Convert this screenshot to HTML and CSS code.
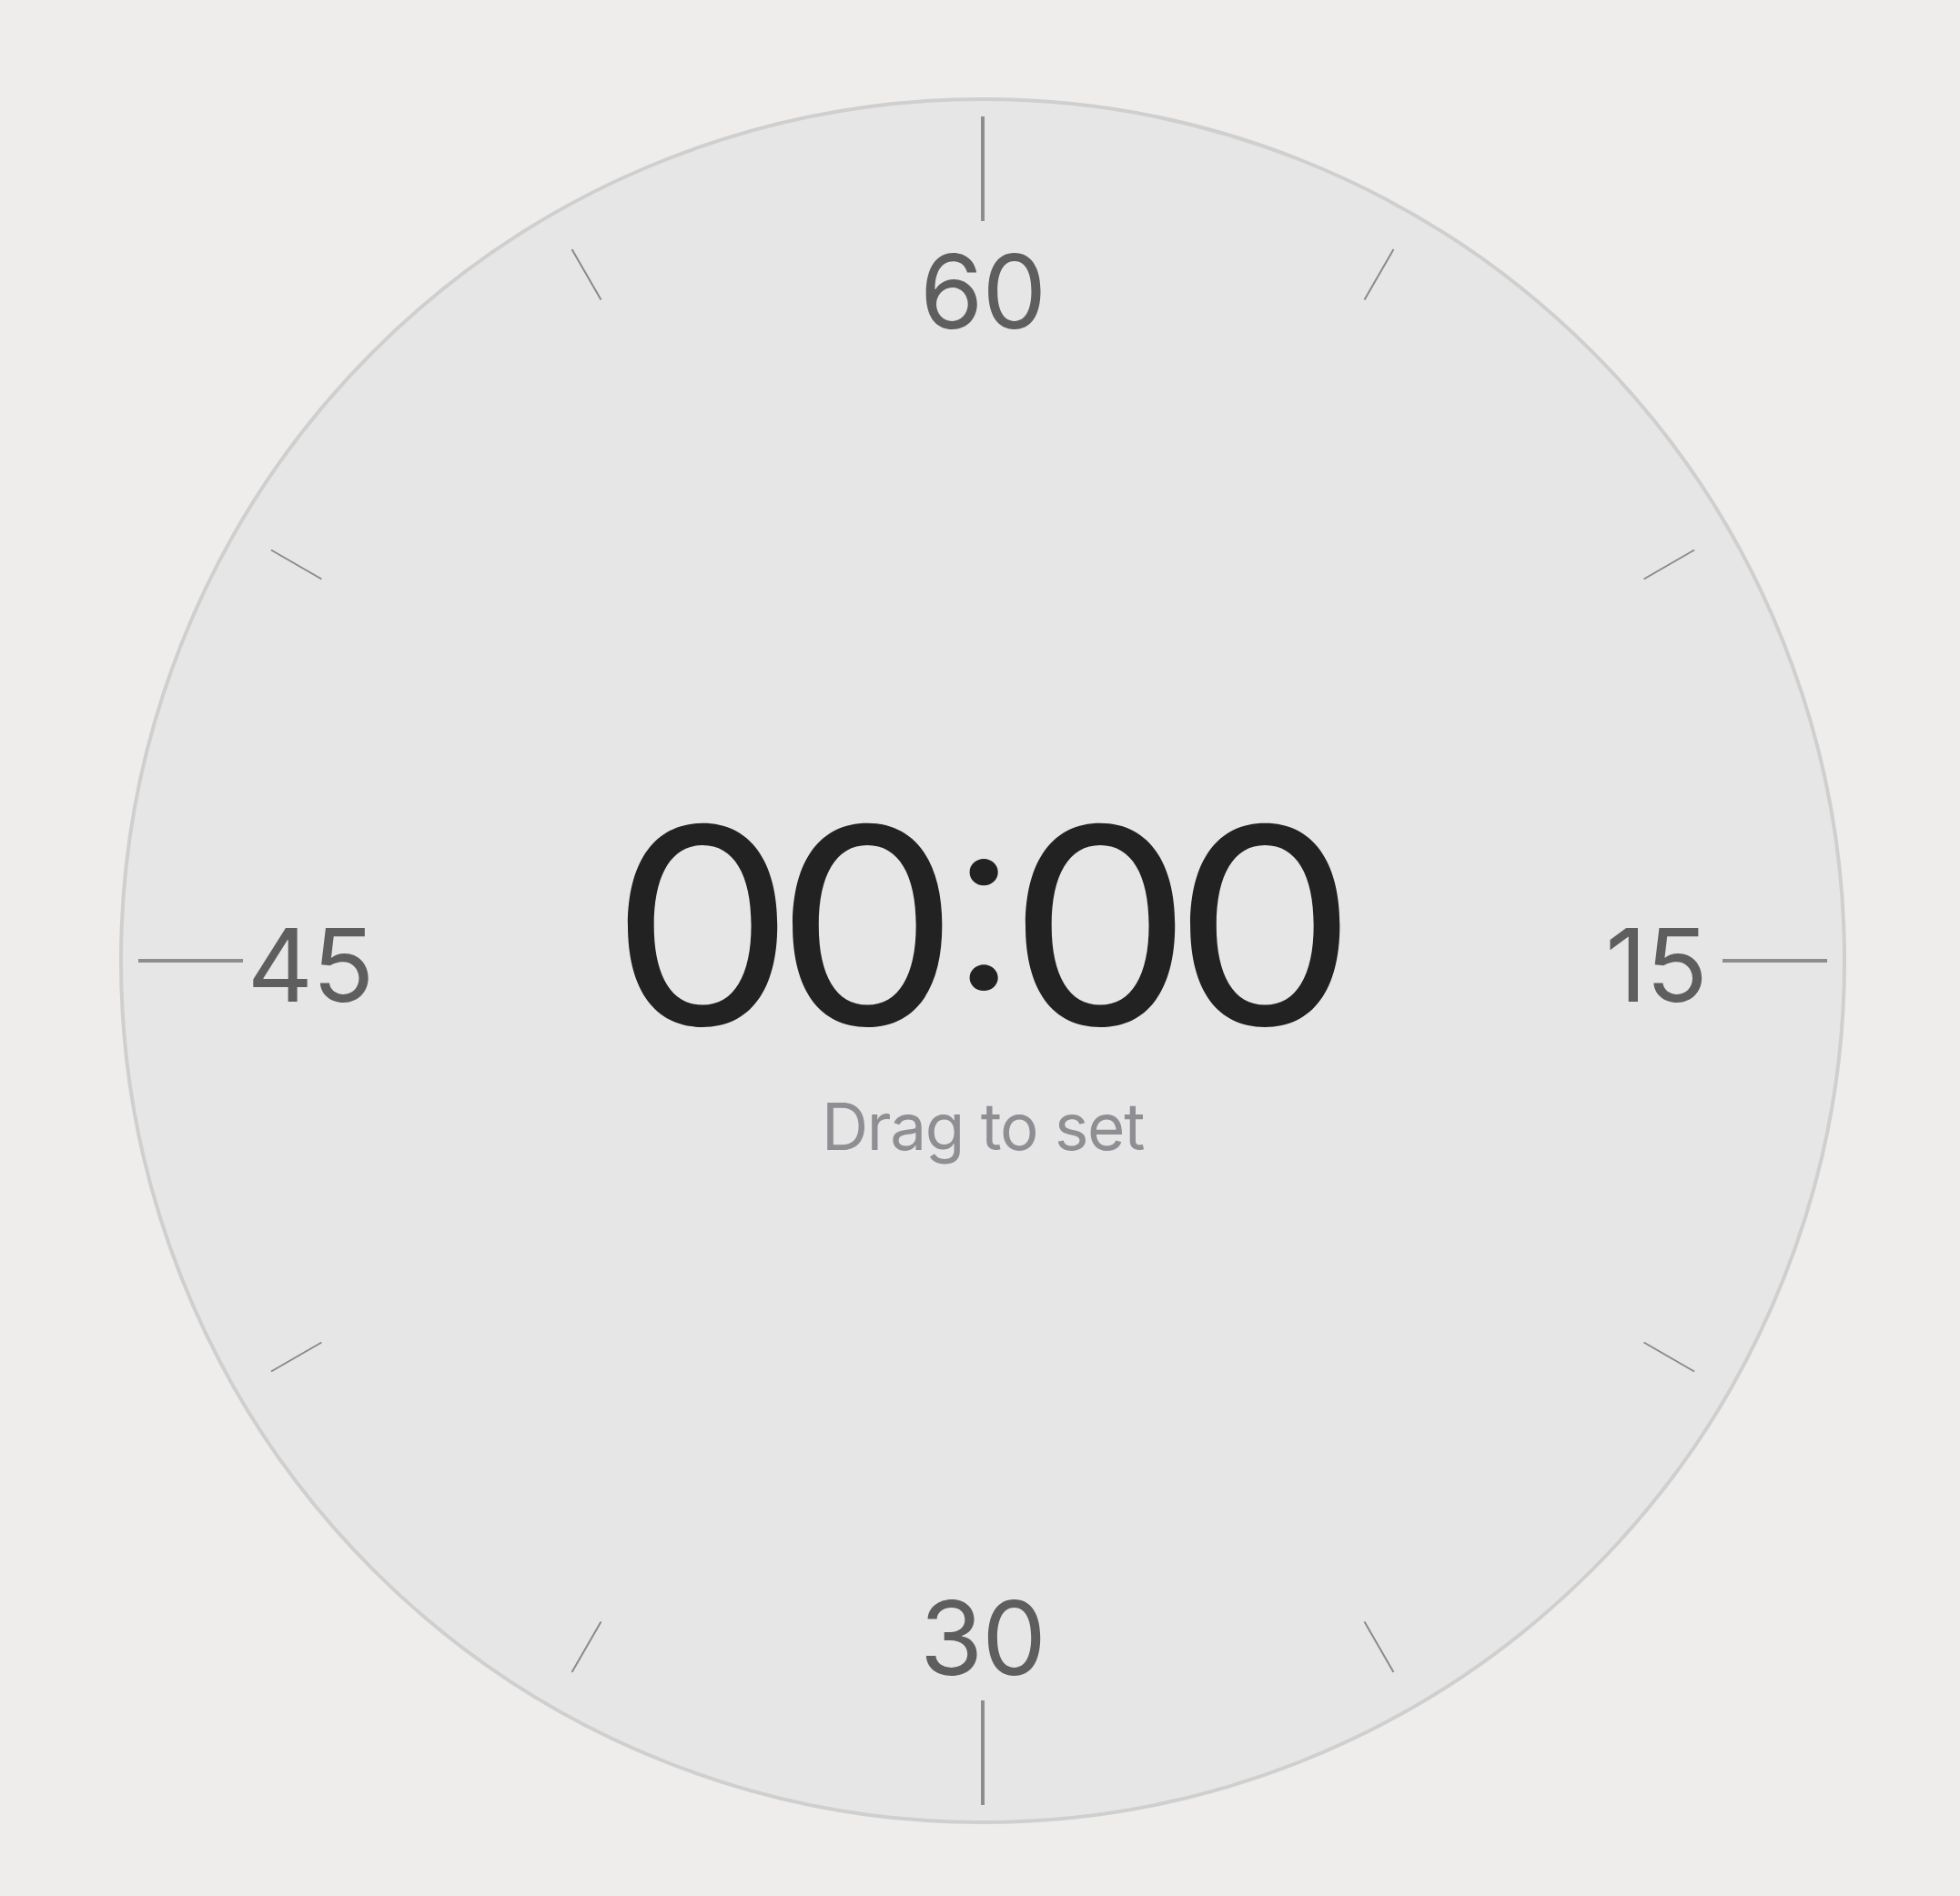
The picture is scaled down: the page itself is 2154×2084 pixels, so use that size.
FILE: index.html
```html
<!DOCTYPE html>
<html lang="en">
<head>
<meta charset="utf-8">
<title>Timer</title>
<link rel="stylesheet" href="styles.css">
</head>
<body>
<main class="stage">
  <div class="dial">
    <svg class="ticks" viewBox="0 0 1898 1898" width="1898" height="1898" aria-hidden="true">
      <g stroke="#8d8d8d" stroke-width="4">
        <line x1="949" y1="21" x2="949" y2="136"/>
        <line x1="949" y1="1762" x2="949" y2="1877"/>
        <line x1="21" y1="949" x2="136" y2="949"/>
        <line x1="1762" y1="949" x2="1877" y2="949"/>
      </g>
      <g stroke="#8a8a8a" stroke-width="2" transform="translate(949 949)">
        <line x1="0" y1="-839" x2="0" y2="-903" transform="rotate(30)"/>
        <line x1="0" y1="-839" x2="0" y2="-903" transform="rotate(60)"/>
        <line x1="0" y1="-839" x2="0" y2="-903" transform="rotate(120)"/>
        <line x1="0" y1="-839" x2="0" y2="-903" transform="rotate(150)"/>
        <line x1="0" y1="-839" x2="0" y2="-903" transform="rotate(210)"/>
        <line x1="0" y1="-839" x2="0" y2="-903" transform="rotate(240)"/>
        <line x1="0" y1="-839" x2="0" y2="-903" transform="rotate(300)"/>
        <line x1="0" y1="-839" x2="0" y2="-903" transform="rotate(330)"/>
      </g>
    </svg>
    <span class="mark mark-top">60</span>
    <span class="mark mark-right">15</span>
    <span class="mark mark-bottom">30</span>
    <span class="mark mark-left">45</span>
    <div class="readout">
      <div class="time">00<span class="colon">:</span>00</div>
      <div class="hint">Drag to set</div>
    </div>
  </div>
</main>
</body>
</html>
```

FILE: styles.css
```css
html, body {
  margin: 0;
  padding: 0;
}

body {
  background: #eeedeb;
  font-family: Inter, "Noto Sans", "Liberation Sans", sans-serif;
  width: 2154px;
  height: 2084px;
  overflow: hidden;
}

.stage {
  display: flex;
  justify-content: center;
  padding-top: 107px;
  padding-left: 6px;
}

.dial {
  position: relative;
  box-sizing: border-box;
  width: 1898px;
  height: 1898px;
  border-radius: 50%;
  border: 4px solid #cfcfcf;
  background: #e6e6e6;
  display: flex;
  align-items: center;
  justify-content: center;
}

.ticks {
  position: absolute;
  top: -4px;
  left: -4px;
}

.mark {
  position: absolute;
  font-size: 112px;
  line-height: 1;
  color: #5e5e5e;
  transform: translate(-50%, -50%);
  letter-spacing: -1px;
}

.mark-top { left: 945px; top: 209px; }
.mark-bottom { left: 945px; top: 1689px; }
.mark-left { left: 206px; top: 949px; }
.mark-right { left: 1685px; top: 949px; }

.readout {
  display: flex;
  flex-direction: column;
  align-items: center;
  padding-top: 28px;
}

.time {
  font-size: 300px;
  line-height: 1;
  color: #222222;
  letter-spacing: -20px;
  margin-left: -20px;
  font-weight: 370;
  font-feature-settings: "case" 1;
  transform: scaleX(1.07);
}

.colon {
  display: inline-block;
  margin: 0 6px;
  font-size: 0.92em;
  font-weight: 300;
  vertical-align: 9px;
}

.hint {
  margin-top: 36px;
  font-size: 71px;
  line-height: 1;
  color: #8e8e93;
  letter-spacing: -1.3px;
}
```
